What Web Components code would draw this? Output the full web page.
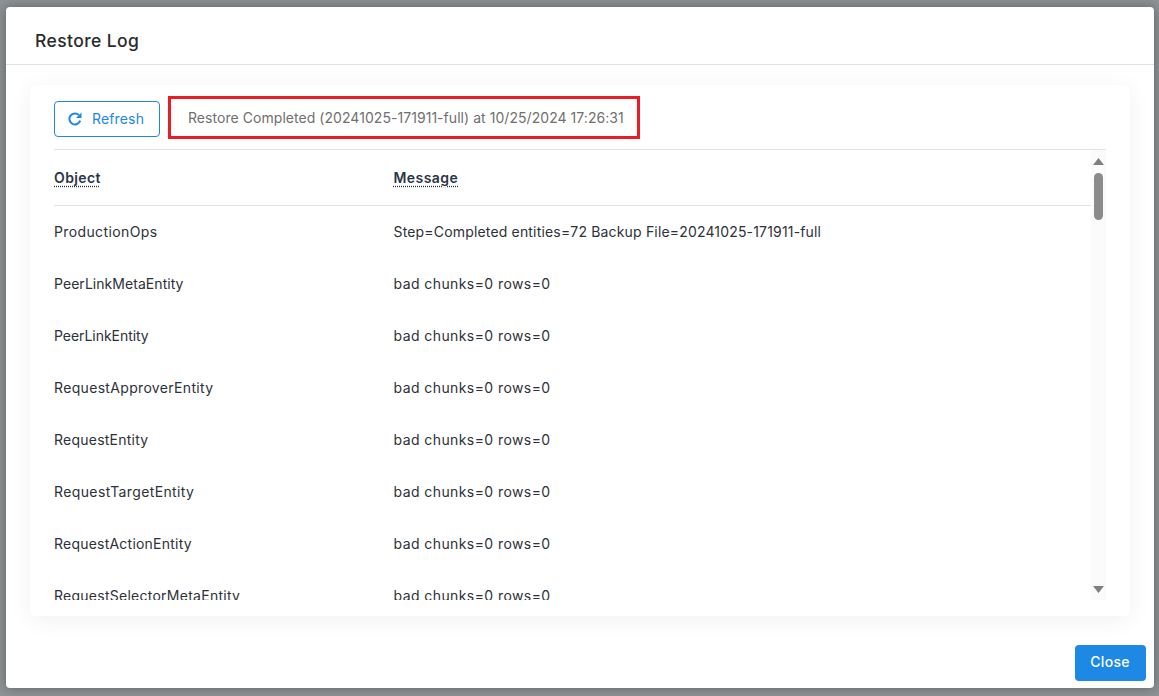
<!DOCTYPE html>
<html><head><meta charset="utf-8">
<style>
html,body{margin:0;padding:0;height:100%;overflow:hidden}
body{font-family:"Inter","Open Sans","Liberation Sans",sans-serif}
</style></head>
<body>
<restore-dialog heading="Restore Log">
  <log-card>
    <log-toolbar slot="toolbar" status="Restore Completed (20241025-171911-full) at 10/25/2024 17:26:31"></log-toolbar>
    <log-row head object="Object" message="Message"></log-row>
    <log-row object="ProductionOps" message="Step=Completed entities=72 Backup File=20241025-171911-full" style="--msg-ls:.17px"></log-row>
    <log-row object="PeerLinkMetaEntity" message="bad chunks=0 rows=0" style="--obj-ls:.05px"></log-row>
    <log-row object="PeerLinkEntity" message="bad chunks=0 rows=0" style="--obj-ls:-.05px"></log-row>
    <log-row object="RequestApproverEntity" message="bad chunks=0 rows=0" style="--obj-ls:.33px"></log-row>
    <log-row object="RequestEntity" message="bad chunks=0 rows=0" style="--obj-ls:.23px"></log-row>
    <log-row object="RequestTargetEntity" message="bad chunks=0 rows=0"></log-row>
    <log-row object="RequestActionEntity" message="bad chunks=0 rows=0" style="--obj-ls:.22px"></log-row>
    <log-row object="RequestSelectorMetaEntity" message="bad chunks=0 rows=0" style="--obj-ls:.26px"></log-row>
  </log-card>
</restore-dialog>
<script>
const def=(name,html,init)=>customElements.define(name,class extends HTMLElement{
  constructor(){super();this.attachShadow({mode:'open'}).innerHTML=html;}
  connectedCallback(){init&&init(this,this.shadowRoot);}
});
def('restore-dialog',`<style>
:host{display:block;box-sizing:border-box;height:696px;padding:7px 5px 8px 6px;background:#8f9396}
.d{height:100%;background:#fff;border-radius:4px;display:flex;flex-direction:column;box-shadow:0 0 12px rgba(0,0,0,.35)}
header{height:57px;box-sizing:content-box;flex:none;border-bottom:1px solid #dfe1e2;display:flex;align-items:flex-end;padding-left:29px;font-size:17.5px;font-weight:500;color:#2b2b2b;letter-spacing:.4px}
header span{padding-bottom:13px}
main{flex:1;min-height:0;padding:20px 24px 0 24px}
footer{flex:none;height:72px;box-sizing:border-box;padding:29px 8px 7px 0;display:flex;justify-content:flex-end}
button{width:71px;height:36px;border:0;border-radius:4px;background:#1e88e5;color:#fff;font:500 14px "Inter",sans-serif;padding:0 1px 3px 0;letter-spacing:.3px}
</style><div class="d"><header><span id="h"></span></header><main><slot></slot></main><footer><button>Close</button></footer></div>`,
(t,s)=>{s.getElementById('h').textContent=t.getAttribute('heading');});
def('log-card',`<style>
:host{display:block;height:531px;box-sizing:border-box;background:#fff;border-radius:6px;padding:11px 24px 16px 24px;box-shadow:0 4px 24px rgba(0,0,0,.06)}
.wrap{display:flex;height:450px;border-top:1px solid #dfe1e2;margin-top:10px;}
.rows{flex:1;min-width:0;overflow:hidden}
.sb{width:15px;flex:none;background:#fbfbfb;display:flex;flex-direction:column;align-items:center;padding-top:8px;box-sizing:border-box}
.thumb{width:9px;height:47px;border-radius:5px;background:#8b8b8b;margin-top:8px}
.sp{flex:1}
svg{display:block}
.dn{margin-bottom:7px}
</style><slot name="toolbar"></slot><div class="wrap"><div class="rows"><slot></slot></div>
<div class="sb"><svg width="11" height="7" viewBox="0 0 11 7"><path d="M5.500 0L11 7H0z" fill="#808080"/></svg><div class="thumb"></div><div class="sp"></div><svg class="dn" width="11" height="7" viewBox="0 0 11 7"><path d="M0 0h11L5.500 7z" fill="#808080"/></svg></div></div>`);
def('log-toolbar',`<style>
:host{display:flex;align-items:center;gap:8px;height:43px}
button{display:flex;align-items:center;gap:10px;box-sizing:border-box;width:106px;height:36px;margin-top:3px;padding:0 0 1px 13px;background:#fff;border:1px solid #1e88e5;border-radius:4px;color:#1e88e5;font:400 14px "Inter",sans-serif;letter-spacing:.15px}
.st{box-sizing:border-box;width:472px;height:43px;border:3px solid #ed1c24;display:flex;align-items:center;padding-left:17px;font-size:14px;color:#6f6f6f;white-space:nowrap;letter-spacing:.05px}
</style><button><svg width="14" height="14" viewBox="0 0 14 14"><path d="M12.200 8.600A5.500 5.500 0 1 1 10.900 3.100" fill="none" stroke="#1e88e5" stroke-width="2"/><path d="M13.500 .5v5.500H8z" fill="#1e88e5"/></svg>Refresh</button><div class="st" id="s"></div>`,
(t,s)=>{s.getElementById('s').textContent=t.getAttribute('status');});
def('log-row',`<style>
:host{display:grid;grid-template-columns:339.5px 1fr;height:52px;align-items:center;font-size:14px;color:#2d3138;white-space:nowrap;letter-spacing:.38px}
:host(:not([head])) div{padding-bottom:2px}
:host([head]){height:55px;border-bottom:1px solid #dfe1e2;font-weight:600;color:#2a3547}
:host([head]) span{text-decoration:underline dotted;text-underline-offset:3px}
#o{letter-spacing:var(--obj-ls,.38px)}
#m{letter-spacing:var(--msg-ls,.42px)}
</style><div><span id="o"></span></div><div><span id="m"></span></div>`,
(t,s)=>{s.getElementById('o').textContent=t.getAttribute('object');s.getElementById('m').textContent=t.getAttribute('message');});
</script>
</body></html>
